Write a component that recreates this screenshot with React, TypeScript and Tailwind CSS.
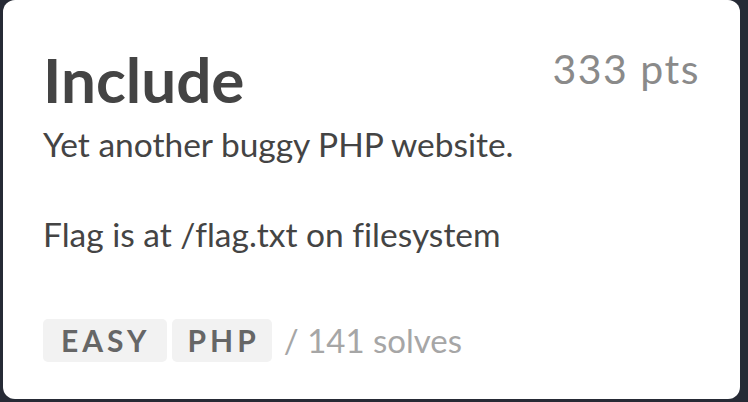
export default function App() {
  return (
    <div
      className="w-[748px] h-[402px] bg-[#262a35] overflow-hidden [font-variant-ligatures:none]"
      style={{ fontFamily: 'Lato, "Noto Sans", sans-serif' }}
    >
      <div className="ml-[3px] w-[737px] h-[399px] bg-white rounded-[12px] pl-[40px] pr-[40px] pt-[44px]">
        {/* header */}
        <div className="flex justify-between items-start">
          <h1 className="text-[62px] leading-[70px] font-bold text-[#444444]">Include</h1>
          <span className="text-[41px] leading-[46px] tracking-[1.5px] text-[#8a8a8a] mt-[2px]">333 pts</span>
        </div>

        <p className="text-[33.5px] leading-[45px] text-[#444444] whitespace-pre-line mt-[8px]">
          {'Yet another buggy PHP website.\n\nFlag is at /flag.txt on filesystem'}
        </p>

        {/* tags */}
        <div className="flex items-center gap-[5px] mt-[59px]">
          <span className="bg-[#f2f2f2] rounded-[5px] h-[43px] pl-[18px] pr-[16px] flex items-center text-[30px] font-bold tracking-[4px] text-[#666666]">
            EASY
          </span>
          <span className="bg-[#f2f2f2] rounded-[5px] h-[43px] pl-[16px] pr-[12px] flex items-center text-[30px] font-bold tracking-[4px] text-[#666666]">
            PHP
          </span>
          <span className="ml-[7px] text-[33px] text-[#a6a6a6]">/ 141 solves</span>
        </div>
      </div>
    </div>
  )
}
